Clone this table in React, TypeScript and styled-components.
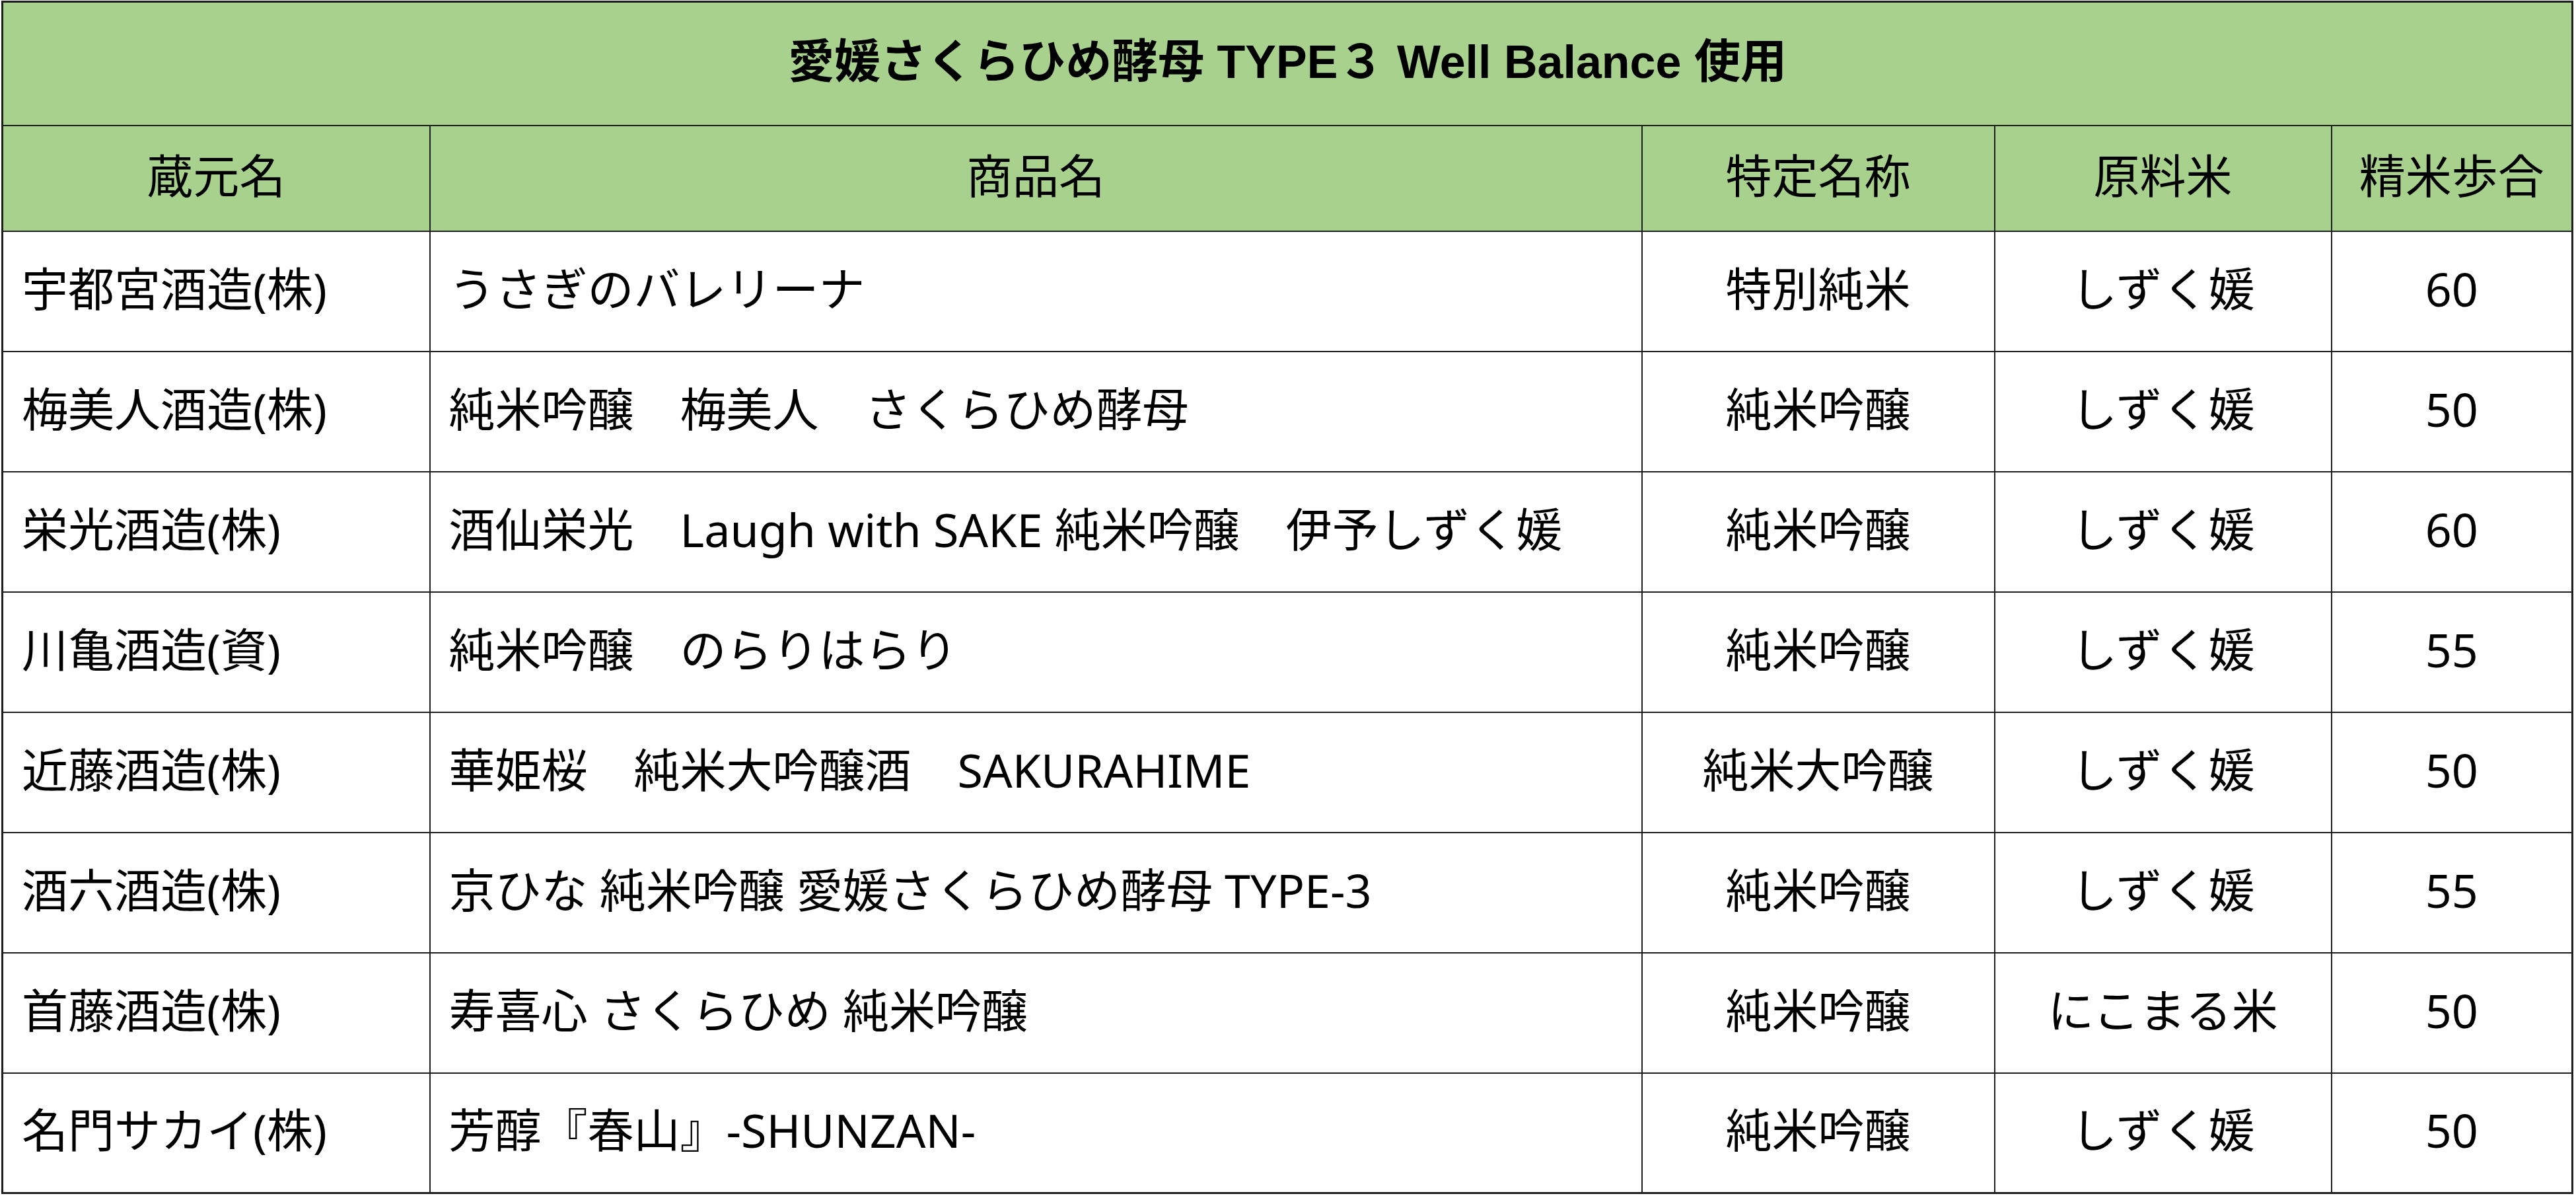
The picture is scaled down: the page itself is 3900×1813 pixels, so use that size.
import React from "react";
import styled, { createGlobalStyle } from "styled-components";

type Row = {
  brewery: string;
  product: string;
  grade: string;
  rice: string;
  polish: string;
};

const rows: Row[] = [
  { brewery: "宇都宮酒造(株)", product: "うさぎのバレリーナ", grade: "特別純米", rice: "しずく媛", polish: "60" },
  { brewery: "梅美人酒造(株)", product: "純米吟醸　梅美人　さくらひめ酵母", grade: "純米吟醸", rice: "しずく媛", polish: "50" },
  { brewery: "栄光酒造(株)", product: "酒仙栄光　Laugh with SAKE 純米吟醸　伊予しずく媛", grade: "純米吟醸", rice: "しずく媛", polish: "60" },
  { brewery: "川亀酒造(資)", product: "純米吟醸　のらりはらり", grade: "純米吟醸", rice: "しずく媛", polish: "55" },
  { brewery: "近藤酒造(株)", product: "華姫桜　純米大吟醸酒　SAKURAHIME", grade: "純米大吟醸", rice: "しずく媛", polish: "50" },
  { brewery: "酒六酒造(株)", product: "京ひな 純米吟醸 愛媛さくらひめ酵母 TYPE-3", grade: "純米吟醸", rice: "しずく媛", polish: "55" },
  { brewery: "首藤酒造(株)", product: "寿喜心 さくらひめ 純米吟醸", grade: "純米吟醸", rice: "にこまる米", polish: "50" },
  { brewery: "名門サカイ(株)", product: "芳醇『春山』-SHUNZAN-", grade: "純米吟醸", rice: "しずく媛", polish: "50" },
];

const GlobalStyle = createGlobalStyle`
  html, body {
    margin: 0;
    padding: 0;
    background: #ffffff;
    font-family: "Noto Sans", "Noto Sans CJK JP", sans-serif;
    color: #000000;
  }
`;

const Page = styled.div`
  padding: 1px 0 0 2px;
`;

const Table = styled.table`
  width: 3891px;
  border-collapse: collapse;
  table-layout: fixed;
  border: 3px solid #1e1e1e;
`;

const TitleCell = styled.th`
  box-sizing: border-box;
  height: 187px;
  padding: 0 0 4px;
  background: #a9d18e;
  border: 2px solid #1e1e1e;
  font-family: "Liberation Sans", "Noto Sans CJK JP", sans-serif;
  font-size: 70px;
  line-height: 1.2;
  font-weight: 700;
  text-align: center;
  vertical-align: middle;
`;

const HeadCell = styled.th`
  box-sizing: border-box;
  height: 160px;
  padding: 0 0 8px;
  background: #a9d18e;
  border: 2px solid #1e1e1e;
  font-size: 70px;
  line-height: 1.2;
  font-weight: 400;
  text-align: center;
  vertical-align: middle;
`;

const Cell = styled.td<{ $align?: "left" | "center" }>`
  box-sizing: border-box;
  height: 182px;
  padding: 0 0 8px ${(p) => (p.$align === "left" ? "28px" : "0")};
  border: 2px solid #1e1e1e;
  font-size: 70px;
  line-height: 1.2;
  text-align: ${(p) => p.$align ?? "center"};
  vertical-align: middle;
  white-space: nowrap;
`;

export default function App() {
  return (
    <Page>
      <GlobalStyle />
      <Table>
        <colgroup>
          <col style={{ width: 647 }} />
          <col style={{ width: 1835 }} />
          <col style={{ width: 534 }} />
          <col style={{ width: 510 }} />
          <col style={{ width: 365 }} />
        </colgroup>
        <thead>
          <tr>
            <TitleCell colSpan={5}>愛媛さくらひめ酵母 TYPE３ Well Balance 使用</TitleCell>
          </tr>
          <tr>
            <HeadCell>蔵元名</HeadCell>
            <HeadCell>商品名</HeadCell>
            <HeadCell>特定名称</HeadCell>
            <HeadCell>原料米</HeadCell>
            <HeadCell>精米歩合</HeadCell>
          </tr>
        </thead>
        <tbody>
          {rows.map((r) => (
            <tr key={r.brewery}>
              <Cell $align="left">{r.brewery}</Cell>
              <Cell $align="left">{r.product}</Cell>
              <Cell>{r.grade}</Cell>
              <Cell>{r.rice}</Cell>
              <Cell>{r.polish}</Cell>
            </tr>
          ))}
        </tbody>
      </Table>
    </Page>
  );
}
